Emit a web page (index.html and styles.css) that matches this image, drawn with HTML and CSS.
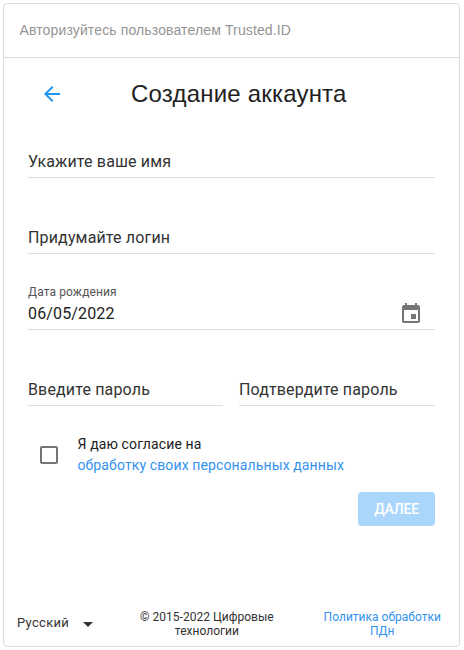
FILE: index.html
```html
<!DOCTYPE html>
<html lang="ru">
<head>
<meta charset="utf-8">
<title>Создание аккаунта</title>
<link rel="stylesheet" href="styles.css">
</head>
<body>
<main class="card">
  <header class="card-header">Авторизуйтесь пользователем Trusted.ID</header>
  <section class="content">
    <div class="title-row">
      <svg class="back" viewBox="0 0 24 24"><path d="M20 11H7.83l5.59-5.59L12 4l-8 8 8 8 1.41-1.41L7.83 13H20v-2z"/></svg>
      <h1 class="title">Создание аккаунта</h1>
    </div>
    <div class="field"><span class="text">Укажите ваше имя</span></div>
    <div class="field login"><span class="text">Придумайте логин</span></div>
    <div class="field birth">
      <div class="birth-text"><span class="label">Дата рождения</span><span class="text value">06/05/2022</span></div>
      <svg class="calendar" viewBox="0 0 24 24"><path d="M17 12h-5v5h5v-5zM16 1v2H8V1H6v2H5c-1.11 0-1.99.9-1.99 2L3 19c0 1.1.89 2 2 2h14c1.1 0 2-.9 2-2V5c0-1.1-.9-2-2-2h-1V1h-2zm3 18H5V8h14v11z"/></svg>
    </div>
    <div class="passwords">
      <div class="field"><span class="text">Введите пароль</span></div>
      <div class="field"><span class="text">Подтвердите пароль</span></div>
    </div>
    <div class="consent">
      <svg class="checkbox" viewBox="0 0 24 24"><path d="M19 5v14H5V5h14m0-2H5c-1.1 0-2 .9-2 2v14c0 1.1.9 2 2 2h14c1.1 0 2-.9 2-2V5c0-1.1-.9-2-2-2z"/></svg>
      <div class="consent-text">Я даю согласие на<br><a class="link">обработку своих персональных данных</a></div>
    </div>
    <button class="next" disabled>ДАЛЕЕ</button>
  </section>
  <footer class="footer">
    <div class="language"><span>Русский</span><svg class="arrow" viewBox="0 0 24 24"><path d="M7 10l5 5 5-5z"/></svg></div>
    <div class="copyright">© 2015-2022 Цифровые<br>технологии</div>
    <a class="link">Политика обработки<br>ПДн</a>
  </footer>
</main>
</body>
</html>
```
FILE: styles.css
```css
* { box-sizing: border-box; }
body { margin: 0; padding: 3px; background: #fff; font-family: Roboto, "Liberation Sans", sans-serif; color: #212121; }
.card { width: 457px; height: 644px; border: 1px solid #dcdcdc; border-radius: 4px; display: flex; flex-direction: column; }
.card-header { height: 54px; border-bottom: 1px solid #dcdcdc; padding-left: 15.5px; font: 14px/52px "Liberation Sans", sans-serif; letter-spacing: .13px; color: #949494; white-space: nowrap; }
.content { padding: 0 24px; display: flex; flex-direction: column; }
.title-row { display: flex; align-items: center; height: 72px; padding-left: 12px; }
.back { width: 24px; height: 24px; fill: #2196f3; }
.title { margin: 0 0 0 67px; font: 400 24px/32px "Liberation Sans", sans-serif; letter-spacing: .2px; white-space: nowrap; }
.field { height: 48px; border-bottom: 1px solid #dcdcdc; display: flex; align-items: flex-end; padding-bottom: 6px; white-space: nowrap; }
.text { font-size: 16px; line-height: 19px; letter-spacing: .15px; color: #333; }
.login { margin-top: 28px; }
.birth { margin-top: 28px; justify-content: space-between; }
.birth-text { display: flex; flex-direction: column; }
.label { font-size: 12px; line-height: 14px; letter-spacing: .11px; color: #555; margin-bottom: 5px; }
.birth .value { color: #212121; }
.calendar { width: 24px; height: 24px; fill: #757575; margin: 0 12px -3px 0; }
.passwords { display: grid; grid-template-columns: 195px 196px; gap: 16px; margin-top: 28px; }
.consent { display: flex; margin-top: 28px; height: 44px; padding-left: 9px; }
.checkbox { width: 24px; height: 24px; fill: #757575; margin-top: 9px; }
.consent-text { margin-left: 16.5px; font-size: 14px; line-height: 21px; letter-spacing: .12px; white-space: nowrap; }
.link { color: #3492f0; text-decoration: none; }
.next { align-self: flex-end; margin-top: 14px; width: 77px; height: 34px; padding: 0; border: 0; border-radius: 4px; background: #aad6fb; color: #fff; font: 500 14px/34px Roboto, sans-serif; letter-spacing: -.2px; }
.footer { margin-top: auto; padding: 0 18px 8px 13px; display: flex; align-items: center; font-size: 12px; line-height: 14px; letter-spacing: .02px; text-align: center; color: #333; white-space: nowrap; }
.language { display: flex; align-items: center; font-size: 13px; letter-spacing: .3px; gap: 7px; margin-top: -2px; }
.arrow { width: 24px; height: 24px; fill: #333; margin-top: 2px; }
.copyright { margin: 0 auto 0 40px; }
```
